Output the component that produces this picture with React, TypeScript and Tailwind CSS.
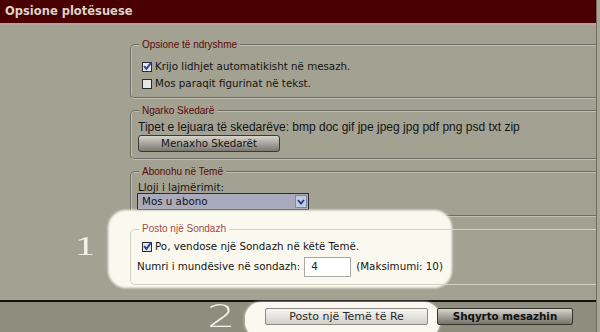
import React from "react";

const Check = ({ checked }: { checked?: boolean }) => (
  <span className="flex h-[10px] w-[10px] shrink-0 items-center justify-center border border-[#2b2b2b] bg-[#e9e8e2]">
    {checked && (
      <svg viewBox="0 0 10 10" className="h-[9px] w-[9px] overflow-visible">
        <path d="M1.2 4.6 L3.8 7.6 L9 0.6" fill="none" stroke="#2d47a6" strokeWidth="2.2" />
      </svg>
    )}
  </span>
);

const legend = "ml-[1px] px-[3px] font-['Liberation_Sans',Arial,sans-serif] text-[10px] leading-[12px]";
const etched = "-mr-[6px] rounded-[5px] border-2 border-[#c2c0b2] [border-style:groove] pl-[6px]";

const App = () => {
  return (
    <div className="relative h-[332px] w-[600px] overflow-hidden bg-[#a8a697] font-['DejaVu_Sans',Verdana,sans-serif] text-[10.3px] text-[#141414]">
      <div className="flex h-full w-[597px] flex-col overflow-hidden border-r border-[#6f6d61]">
        {/* title bar */}
        <div className="flex h-[23px] items-center bg-[#4a0000] pl-[5px] text-[11.5px] font-bold text-[#dcd3cb]">
          Opsione plotësuese
        </div>
        <div className="h-[2px] bg-[#b5a29b]" />

        {/* options panel */}
        <div className="relative flex h-[275px] bg-[#a3a192]">
          <div className="absolute left-[108px] top-[185px] z-[1] h-[78px] w-[344px] rounded-[18px] bg-[#fbf9ef] blur-[1px]" />

          <div className="w-[130px] shrink-0 pl-[75px] pt-[206px]">
            <span className="inline-block origin-left scale-x-[1.45] font-['Liberation_Serif',serif] text-[28px] leading-[30px] text-[#f3f0e6]">
              1
            </span>
          </div>

          <div className="flex-1 pt-[14px]">
            <fieldset className={`${etched} pb-[5px]`}>
              <legend className={`${legend} text-[#5a0909]`}>Opsione të ndryshme</legend>
              <div className="pl-[4px] pt-[7px]">
                <div className="flex h-[17px] items-center gap-[3px]">
                  <Check checked />
                  Krijo lidhjet automatikisht në mesazh.
                </div>
                <div className="flex h-[17px] items-center gap-[3px]">
                  <Check />
                  Mos paraqit figurinat në tekst.
                </div>
              </div>
            </fieldset>

            <fieldset className={`${etched} mt-[6px] pb-[6px]`}>
              <legend className={`${legend} text-[#5a0909]`}>Ngarko Skedarë</legend>
              <div className="pt-[3px]">
                <div className="font-['Liberation_Sans',Arial,sans-serif] text-[12px] leading-[14px]">
                  Tipet e lejuara të skedarëve: bmp doc gif jpe jpeg jpg pdf png psd txt zip
                </div>
                <button className="mt-[1px] block h-[17px] w-[142px] rounded-[3px] border border-[#3a3a37] bg-linear-to-b from-[#d6d4ce] to-[#7a786f] leading-[15px] text-[#141414]">
                  Menaxho Skedarët
                </button>
              </div>
            </fieldset>

            <fieldset className={`${etched} mt-[6px] pb-[5px]`}>
              <legend className={`${legend} text-[#5a0909]`}>Abonohu në Temë</legend>
              <div className="pt-[3px]">
                <div className="leading-[12px]">Lloji i lajmërimit:</div>
                <div className="-ml-[1px] flex h-[17px] w-[172px] items-center justify-between border border-[#2f2f2f] bg-[#a9abbc] pl-[4px] pr-[1px]">
                  <span>Mos u abono</span>
                  <span className="flex h-[13px] w-[12px] items-center justify-center border border-[#7c86a8] bg-[#c4cade]">
                    <svg viewBox="0 0 8 6" className="h-[6px] w-[8px]">
                      <path d="M1 1 L4 4.5 L7 1" fill="none" stroke="#1d3a98" strokeWidth="1.8" />
                    </svg>
                  </span>
                </div>
              </div>
            </fieldset>

            <fieldset className="relative z-[2] -mr-[6px] mt-[6px] rounded-[5px] border border-[#d4d1c4] pb-[7px] pl-[7px]">
              <legend className={`${legend} text-[#a24a4a]`}>Posto një Sondazh</legend>
              <div className="pt-[3px]">
                <div className="flex h-[17px] items-center gap-[3px] pl-[4px]">
                  <Check checked />
                  Po, vendose një Sondazh në këtë Temë.
                </div>
                <div className="-ml-[1px] mt-[2px] flex h-[20px] items-center">
                  <span>Numri i mundësive në sondazh:</span>
                  <span className="ml-[4px] flex h-[20px] w-[47px] items-center border border-[#a9a9a4] bg-white pl-[6px] text-[#222]">
                    4
                  </span>
                  <span className="ml-[5px]">(Maksimumi: 10)</span>
                </div>
              </div>
            </fieldset>
          </div>
        </div>

        <div className="h-[2px] bg-[#121212]" />

        {/* submit row */}
        <div className="flex h-[30px] bg-[#8f8d7d]">
          <span className="ml-[207px] inline-block w-[38px] shrink-0 origin-left scale-x-[1.4] text-[32px] font-extralight leading-[28px] text-[#f3f1e8]">
            2
          </span>
          <div className="-mr-[3px] h-[36px] w-[195px] shrink-0 rounded-[16px] bg-[#fbf9ef] pl-[20px] pt-[6px] shadow-[0_0_3px_#f4f1e6]">
            <button className="block h-[17px] w-[163px] rounded-[2px] border border-[#8a8984] bg-linear-to-b from-[#f7f6f2] to-[#d2d0c9] text-[11px] leading-[15px] text-[#2a2a2a]">
              Posto një Temë të Re
            </button>
          </div>
          <button className="relative mt-[6px] block h-[17px] w-[136px] shrink-0 rounded-[2px] border border-[#35352f] bg-linear-to-b from-[#d8d6cc] to-[#74726a] font-bold leading-[15px] text-[#111]">
            Shqyrto mesazhin
          </button>
        </div>
      </div>
    </div>
  );
};

export default App;
